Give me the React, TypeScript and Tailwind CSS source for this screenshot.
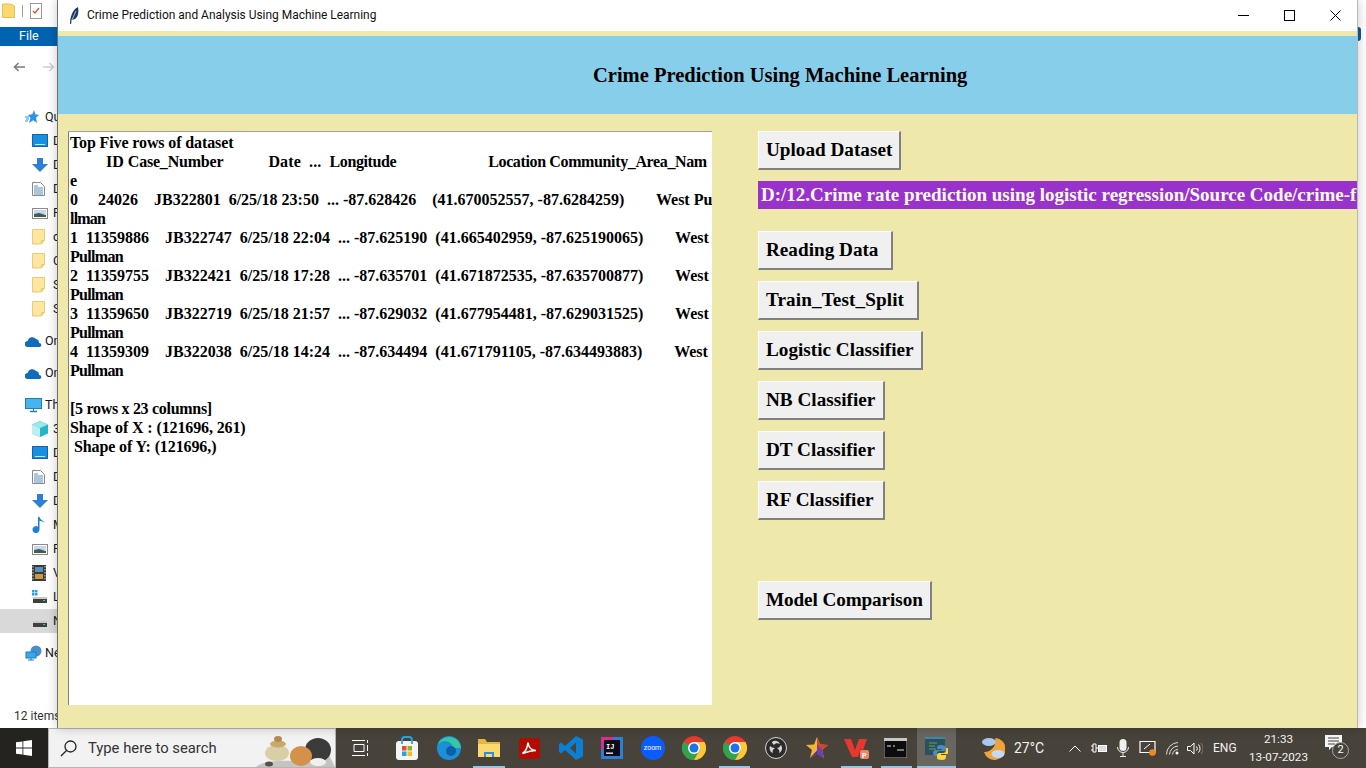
import React from "react";

function FolderIcon() {
  return (
    <svg width="13" height="16" viewBox="0 0 13 16">
      <path d="M.5.5h12v11l-3 3.500H.5z" fill="#fde6a0" stroke="#eccb72" />
      <path d="M12.500 11.500h-3V15" fill="#f3d27c" stroke="#eccb72" />
    </svg>
  );
}

function MonitorIcon() {
  return (
    <svg width="16" height="14" viewBox="0 0 16 14">
      <rect x=".5" y=".5" width="15" height="12" fill="#1a8fe0" stroke="#0a66b8" />
      <rect x="3" y="10" width="10" height="1" fill="#bfe3fa" />
    </svg>
  );
}

function DownIcon() {
  return (
    <svg width="16" height="14" viewBox="0 0 16 14">
      <path d="M5 0h6v6h5l-8 8-8-8h5z" fill="#2f7fd6" />
    </svg>
  );
}

function DocIcon() {
  return (
    <svg width="13" height="14" viewBox="0 0 13 14">
      <path d="M.5.5h8l4 4v9H.5z" fill="#fff" stroke="#8a8a8a" />
      <path d="M2 4h4M2 6h9M2 8h9M2 10h9M2 12h9" stroke="#5a8cc0" />
    </svg>
  );
}

function PictureIcon() {
  return (
    <svg width="16" height="11" viewBox="0 0 16 11">
      <rect x=".5" y=".5" width="15" height="10" fill="#fff" stroke="#8a8a8a" />
      <rect x="2" y="2" width="12" height="4" fill="#c5d9ea" />
      <path d="M2 6l5-1 7 2v2H2z" fill="#3f5f4f" />
    </svg>
  );
}

function CloudIcon() {
  return (
    <svg width="17" height="11" viewBox="0 0 17 11">
      <path d="M3 11a3 3 0 0 1-.4-6A4.800 4.800 0 0 1 11 3a3.800 3.800 0 0 1 3 4 2 2 0 0 1 .5 4z" fill="#0f6cbd" />
    </svg>
  );
}

function StarIcon() {
  return (
    <svg width="14" height="14" viewBox="0 0 14 14">
      <path d="M9 0l1.300 4.200L14 5l-3 2.700 1 5.300-3.600-2.700L4 13l1.500-5L3 5l4.300-.7z" fill="#2a93e6" />
      <path d="M0 7h4M1 9h3M0 11h3" stroke="#2a93e6" />
    </svg>
  );
}

function PcIcon() {
  return (
    <svg width="17" height="15" viewBox="0 0 17 15">
      <rect x=".5" y=".5" width="16" height="10" fill="#46b4f0" stroke="#1c7fc4" />
      <path d="M5 13.500h7" stroke="#1c7fc4" strokeWidth="1.500" />
      <path d="M8.500 11v2" stroke="#1c7fc4" />
    </svg>
  );
}

function CubeIcon() {
  return (
    <svg width="16" height="16" viewBox="0 0 16 16">
      <path d="M8 0l8 3.500v9L8 16l-8-3.500v-9z" fill="#27b7c4" />
      <path d="M8 0l8 3.500L8 7 0 3.500z" fill="#9be7ec" />
      <path d="M0 3.500L8 7v9l-8-3.500z" fill="#bdeff2" />
    </svg>
  );
}

function MusicIcon() {
  return (
    <svg width="14" height="16" viewBox="0 0 14 16">
      <path d="M6 0h1.500c.5 2.500 3.500 3.500 5.500 5.500-2-.8-3.500-1.300-5.500-1.700V12.500a3.500 3.500 0 1 1-1.500-2.800z" fill="#1f7fd8" />
    </svg>
  );
}

function FilmIcon() {
  return (
    <svg width="14" height="16" viewBox="0 0 14 16">
      <rect width="14" height="16" fill="#3a3a3a" />
      <rect x="3" y="2" width="8" height="5" fill="#5b8fc0" />
      <rect x="3" y="9" width="8" height="5" fill="#c9993a" />
      <path d="M1 1v14M13 1v14" stroke="#ddd" strokeDasharray="1.500 1.500" />
    </svg>
  );
}

function DriveIcon({ win }: { win?: boolean }) {
  return (
    <svg width="16" height="14" viewBox="0 0 16 14">
      {win && <path d="M0 0h2.500v2.500H0zM3 0h2.500v2.500H3zM0 3h2.500v2.500H0zM3 3h2.500v2.500H3z" fill="#22a0e8" />}
      <rect x="1" y="7" width="14" height="2" fill="#c9c9c9" />
      <rect x="1" y="9" width="14" height="4" fill="#3f3f3f" />
      <rect x="11" y="10" width="2" height="1" fill="#4fd06a" />
    </svg>
  );
}

function NetworkIcon() {
  return (
    <svg width="17" height="16" viewBox="0 0 17 16">
      <circle cx="11" cy="6" r="5.500" fill="#4a8fc9" />
      <rect x="1" y="7" width="10" height="6" fill="#3aa7ea" stroke="#1c7fc4" />
      <path d="M3 15h6M6 13v2" stroke="#1c7fc4" />
    </svg>
  );
}

function SideRow({ icon, label, indent, selected, className = "" }: { icon: React.ReactNode; label: string; indent?: boolean; selected?: boolean; className?: string }) {
  return (
    <div className={`${className} h-6 flex items-center whitespace-nowrap text-[12.500px] text-[#1a1a1a] ${selected ? "bg-[#d9d9d9]" : ""} ${indent ? "pl-[32px]" : "pl-[25px]"}`}>
      <span className={`${indent ? "w-[21px]" : "w-[20px]"} shrink-0 flex items-center`}>{icon}</span>
      <span>{label}</span>
    </div>
  );
}

function ExplorerBehind() {
  return (
    <div className="w-[57px] shrink-0 overflow-hidden bg-white flex flex-col [font-family:'Roboto',sans-serif]">
      <div className="h-[27px] shrink-0 flex items-start gap-[7px] pl-[2px] pt-[3px]">
        <svg width="13" height="15" viewBox="0 0 13 15"><path d="M.5 1h8l4 2v11.500H.5z" fill="#fbd96f" stroke="#e6bf55" /></svg>
        <span className="w-px h-3 mt-[2px] bg-[#a0a0a0]" />
        <svg width="12" height="16" viewBox="0 0 12 16"><rect x=".5" y=".5" width="11" height="15" fill="#fff" stroke="#999" /><path d="M3 8l2 2 4-5" stroke="#d9542b" strokeWidth="1.300" fill="none" /></svg>
      </div>
      <div className="h-[19px] shrink-0 w-[57px] bg-[#0063b1] flex items-center pl-[19px] text-[12.500px] text-white">File</div>
      <div className="h-[42px] shrink-0 flex items-center gap-[18px] pl-[13px]">
        <svg width="12" height="10" viewBox="0 0 12 10" fill="none" stroke="#7a7a7a" strokeWidth="1.500"><path d="M12 5H1.500M5.500 1L1.500 5l4 4" /></svg>
        <svg width="12" height="10" viewBox="0 0 12 10" fill="none" stroke="#cfcfcf" strokeWidth="1.500"><path d="M0 5h10.500M6.500 1l4 4-4 4" /></svg>
      </div>
      <div className="flex-1 pt-[17px]">
        <SideRow icon={<StarIcon />} label="Quick access" />
        <SideRow indent icon={<MonitorIcon />} label="Desktop" />
        <SideRow indent icon={<DownIcon />} label="Downloads" />
        <SideRow indent icon={<DocIcon />} label="Documents" />
        <SideRow indent icon={<PictureIcon />} label="Pictures" />
        <SideRow indent icon={<FolderIcon />} label="code" />
        <SideRow indent icon={<FolderIcon />} label="Crime" />
        <SideRow indent icon={<FolderIcon />} label="Source" />
        <SideRow indent icon={<FolderIcon />} label="Screens" />
        <SideRow icon={<CloudIcon />} label="OneDrive" className="mt-2" />
        <SideRow icon={<CloudIcon />} label="OneDrive" className="mt-2" />
        <SideRow icon={<PcIcon />} label="This PC" className="mt-2" />
        <SideRow indent icon={<CubeIcon />} label="3D Objects" />
        <SideRow indent icon={<MonitorIcon />} label="Desktop" />
        <SideRow indent icon={<DocIcon />} label="Documents" />
        <SideRow indent icon={<DownIcon />} label="Downloads" />
        <SideRow indent icon={<MusicIcon />} label="Music" />
        <SideRow indent icon={<PictureIcon />} label="Pictures" />
        <SideRow indent icon={<FilmIcon />} label="Videos" />
        <SideRow indent icon={<DriveIcon win />} label="Local Disk" />
        <SideRow indent selected icon={<DriveIcon />} label="New Volume" />
        <SideRow icon={<NetworkIcon />} label="Network" className="mt-2" />
      </div>
      <div className="h-[22px] shrink-0 pl-[14px] text-[12px] leading-[20px] whitespace-nowrap text-[#333]">12 items</div>
    </div>
  );
}

function TkButton({ label, width, className = "" }: { label: string; width: string; className?: string }) {
  return (
    <button
      className={`${width} ${className} h-[39px] shrink-0 bg-[#f0f0f0] border-t border-l border-t-white border-l-white border-b-2 border-r-2 border-b-[#808080] border-r-[#808080] pl-[7px] text-left text-[19.200px] font-bold text-black [font-family:'Liberation_Serif',serif]`}
    >
      {label}
    </button>
  );
}

function OutputText() {
  return (
    <div className="w-[644px] h-[574px] shrink-0 bg-white border-t border-l border-t-[#a0a0a0] border-l-[#808080] px-[1px] py-[1px] overflow-hidden text-[16px] leading-[19px] font-bold text-black whitespace-pre [font-family:'Liberation_Serif',serif]">
      <div className="h-[19px] tracking-[-0.12px]">Top Five rows of dataset</div>
      <div className="h-[19px]">
        {"         ID "}
        <span className="tracking-[-0.2px]">Case_Number</span>
        <span className="tracking-[0.1px]">{"           Date  ...  "}</span>
        <span className="tracking-[-0.4px]">Longitude</span>
        {"                       "}
        <span className="tracking-[-0.37px]">Location Community_Area_Nam</span>
      </div>
      <div className="h-[19px]">e</div>
      <div className="h-[19px]">0     24026    JB322801  6/25/18 23:50  ... -87.628426    (41.670052557, -87.6284259)        West Pu</div>
      <div className="h-[19px] tracking-[-0.8px]">llman</div>
      <div className="h-[19px]">1  11359886    JB322747  6/25/18 22:04  ... -87.625190  (41.665402959, -87.625190065)        West</div>
      <div className="h-[19px] tracking-[-0.7px]">Pullman</div>
      <div className="h-[19px]">2  11359755    JB322421  6/25/18 17:28  ... -87.635701  (41.671872535, -87.635700877)        West</div>
      <div className="h-[19px] tracking-[-0.7px]">Pullman</div>
      <div className="h-[19px]">3  11359650    JB322719  6/25/18 21:57  ... -87.629032  (41.677954481, -87.629031525)        West</div>
      <div className="h-[19px] tracking-[-0.7px]">Pullman</div>
      <div className="h-[19px]">4  11359309    JB322038  6/25/18 14:24  ... -87.634494  (41.671791105, -87.634493883)        West</div>
      <div className="h-[19px] tracking-[-0.7px]">Pullman</div>
      <div className="h-[19px]" />
      <div className="h-[19px] tracking-[-0.3px]">[5 rows x 23 columns]</div>
      <div className="h-[19px] tracking-[-0.12px]">Shape of X : (121696, 261)</div>
      <div className="h-[19px] tracking-[-0.1px]"> Shape of Y: (121696,)</div>
    </div>
  );
}

function AppWindow() {
  return (
    <div className="flex-1 min-w-0 flex flex-col border-l border-l-[#707070] border-r border-r-[#b8b8b8] bg-[#eee8aa] shadow-[0_0_10px_rgba(0,0,0,0.22)] z-10">
      <div className="h-[31px] shrink-0 bg-white flex items-center">
        <svg className="ml-[11px]" width="10" height="17" viewBox="0 0 10 17">
          <path d="M1 17C1 11 3 3 9 0c1 5 0 10-3 12l-3 1-1 4z" fill="#1f3a66" />
          <path d="M2 15L7 4" stroke="#c9d8ea" strokeWidth=".8" />
        </svg>
        <span className="ml-[8px] pt-[1px] text-[11.950px] text-[#111] [font-family:'Roboto',sans-serif]">Crime Prediction and Analysis Using Machine Learning</span>
        <div className="ml-auto flex items-center h-full">
          <div className="w-[45px] flex justify-center"><span className="block w-[11px] h-px bg-black" /></div>
          <div className="w-[47px] flex justify-center"><span className="block w-[11px] h-[11px] border border-black" /></div>
          <div className="w-[44px] flex justify-center">
            <svg width="11" height="11" viewBox="0 0 11 11" stroke="#000" strokeWidth="1"><path d="M.5.5l10 10M10.500.5l-10 10" /></svg>
          </div>
        </div>
      </div>
      <div className="mt-[5px] h-[78px] shrink-0 bg-[#87ceeb] flex items-center pl-[535px] text-[20.500px] font-bold text-black [font-family:'Liberation_Serif',serif]">
        Crime Prediction Using Machine Learning
      </div>
      <div className="flex-1 min-h-0 flex pl-[10px] pt-[17px]">
        <OutputText />
        <div className="ml-[46px] flex-1 min-w-0 flex flex-col items-start">
          <TkButton label="Upload Dataset" width="w-[143px]" />
          <div className="mt-[11px] h-[28px] w-full overflow-hidden whitespace-nowrap bg-[#9932cc] pl-[3px] text-[19px] leading-[28px] font-bold text-[#fffafa] [font-family:'Liberation_Serif',serif]">
            D:/12.Crime rate prediction using logistic regression/Source Code/crime-f
          </div>
          <TkButton label="Reading Data" width="w-[135px]" className="mt-[22px]" />
          <TkButton label="Train_Test_Split" width="w-[161px]" className="mt-[11px] tracking-[0.1px]" />
          <TkButton label="Logistic Classifier" width="w-[165px]" className="mt-[11px]" />
          <TkButton label="NB Classifier" width="w-[127px]" className="mt-[11px]" />
          <TkButton label="DT Classifier" width="w-[127px]" className="mt-[11px]" />
          <TkButton label="RF Classifier" width="w-[127px]" className="mt-[11px]" />
          <TkButton label="Model Comparison" width="w-[174px]" className="mt-[61px] tracking-[-0.1px]" />
        </div>
      </div>
    </div>
  );
}

function ChromeIcon() {
  return (
    <svg width="24" height="24" viewBox="0 0 24 24">
      <circle cx="12" cy="12" r="12" fill="#e33b2e" />
      <path d="M12 12L1.600 6A12 12 0 0 0 12 24l6-10z" fill="#2fa44f" />
      <path d="M12 6h10.400A12 12 0 0 1 12 24l6-10.400z" fill="#fcc934" />
      <circle cx="12" cy="12" r="6" fill="#fff" />
      <circle cx="12" cy="12" r="4.500" fill="#1a73e8" />
    </svg>
  );
}

function TaskIcon({ children, className = "w-[41px]" }: { children: React.ReactNode; className?: string }) {
  return <div className={`${className} relative h-full shrink-0 flex items-center justify-center`}>{children}</div>;
}

function RunningMark({ className }: { className: string }) {
  return <span className={`${className} absolute bottom-0 h-[2px] bg-[#8fc7ec]`} />;
}

function Taskbar() {
  return (
    <div className="h-[40px] shrink-0 bg-[#47433a] flex items-center text-white [font-family:'Roboto',sans-serif]">
      <div className="w-[48px] h-full bg-[#25231f] flex items-center justify-center">
        <svg width="16" height="16" viewBox="0 0 16 16" fill="#fff"><path d="M0 2.300l6.500-.9v6.200H0zM7.300 1.300L16 0v7.600H7.300zM0 8.400h6.500v6.200L0 13.700zM7.300 8.400H16V16l-8.700-1.200z" /></svg>
      </div>
      <div className="w-[288px] h-full bg-[#f2f2f2] border border-[#b5b5b5] flex items-center overflow-hidden">
        <svg className="ml-[11px] shrink-0" width="17" height="17" viewBox="0 0 17 17" fill="none" stroke="#222" strokeWidth="1.300"><circle cx="10.500" cy="6.500" r="5.500" /><path d="M6.500 10.500L1 16" /></svg>
        <span className="ml-[11px] text-[14.800px] text-[#333] whitespace-nowrap">Type here to search</span>
        <svg className="ml-auto shrink-0" width="82" height="38" viewBox="0 0 82 38">
          <path d="M3 38c6-6 24-7 36-6 16 1 28 0 36-8l7 14z" fill="#c4c4c0" />
          <ellipse cx="24" cy="24" rx="12" ry="8" fill="#d9cfa6" />
          <ellipse cx="25" cy="15" rx="8" ry="3.500" fill="#c9a96a" />
          <ellipse cx="25" cy="10" rx="4" ry="3" fill="#b58a4c" />
          <ellipse cx="65" cy="21" rx="13" ry="12" fill="#3b3b3b" />
          <ellipse cx="48" cy="27" rx="11" ry="10" fill="#d4914a" />
          <ellipse cx="65" cy="33" rx="8" ry="4" fill="#f0f0ee" />
          <ellipse cx="16" cy="35" rx="4" ry="2.500" fill="#55524c" />
        </svg>
      </div>
      <TaskIcon className="w-[48px]">
        <svg width="17" height="16" viewBox="0 0 17 16" fill="none" stroke="#fff"><path d="M0 .5h13M0 15.500h13M2 4.500h10v7H2zM15.500 0v3M15.500 5v6M15.500 13v3" /></svg>
      </TaskIcon>
      <TaskIcon className="w-[46px]">
        <svg width="24" height="24" viewBox="0 0 24 24">
          <rect x="1" y="5" width="22" height="19" rx="3" fill="#f4f4f4" />
          <path d="M7 8V4a3 3 0 0 1 3-3h4a3 3 0 0 1 3 3v4" fill="none" stroke="#27a6e0" strokeWidth="1.800" />
          <rect x="7" y="10" width="4.500" height="4.500" fill="#e8492f" />
          <rect x="12.500" y="10" width="4.500" height="4.500" fill="#7fba2a" />
          <rect x="7" y="15.500" width="4.500" height="4.500" fill="#1ea5e8" />
          <rect x="12.500" y="15.500" width="4.500" height="4.500" fill="#fcb813" />
        </svg>
      </TaskIcon>
      <TaskIcon className="w-[38px]">
        <svg width="24" height="24" viewBox="0 0 24 24">
          <circle cx="12" cy="12" r="12" fill="#1b8fd8" />
          <path d="M24 13c0-7-5-12-12-12C6 1 2 5 .6 9 3 5 8 4 12 6c3 1.500 4 4 3 6h9z" fill="#35c9a3" />
          <circle cx="14" cy="15" r="5" fill="#0b5fa8" />
        </svg>
      </TaskIcon>
      <TaskIcon>
        <svg width="22" height="18" viewBox="0 0 22 18">
          <path d="M0 0h7l2 3h13v15H0z" fill="#e8b445" />
          <path d="M0 5h22v13H0z" fill="#fbd96f" />
          <path d="M6 18v-5h10v5h-2v-3H8v3z" fill="#2f8fd6" />
        </svg>
        <RunningMark className="left-[5px] right-[4px]" />
      </TaskIcon>
      <TaskIcon>
        <svg width="21" height="21" viewBox="0 0 21 21">
          <rect width="21" height="21" rx="3" fill="#b30b00" />
          <path d="M3.500 15.500c3-2 5-6 5.500-11 .5 4 3 8 8 8-4 0-8 1-13.500 3z" fill="none" stroke="#fff" strokeWidth="1.600" />
        </svg>
      </TaskIcon>
      <TaskIcon>
        <svg width="24" height="24" viewBox="0 0 24 24">
          <path d="M17 0l7 3.500v17L17 24 6 14l-4 3.500L0 16v-8l2-1.500L6 10z" fill="#0b7fd1" />
          <path d="M17 6.500L11 12l6 5.500z" fill="#47433a" />
        </svg>
      </TaskIcon>
      <TaskIcon>
        <svg width="22" height="22" viewBox="0 0 22 22">
          <rect width="22" height="22" fill="#2a7fd6" />
          <path d="M0 0h14L0 14z" fill="#d62f8e" />
          <rect x="3" y="3" width="16" height="16" fill="#0d0d1a" />
          <rect x="5" y="15.500" width="7" height="1.300" fill="#fff" />
          <text x="5" y="12" fontSize="7" fontWeight="700" fill="#fff" fontFamily="Liberation Mono, monospace">IJ</text>
        </svg>
      </TaskIcon>
      <TaskIcon>
        <div className="w-[24px] h-[24px] rounded-full bg-[#0b5cff] flex items-center justify-center text-[7px] text-white">zoom</div>
      </TaskIcon>
      <TaskIcon><ChromeIcon /></TaskIcon>
      <TaskIcon>
        <ChromeIcon />
        <RunningMark className="left-[5px] right-[5px]" />
      </TaskIcon>
      <TaskIcon>
        <svg width="22" height="22" viewBox="0 0 22 22">
          <circle cx="11" cy="11" r="10.500" fill="#2d2a2b" stroke="#d5d5d5" />
          <path d="M7 5a5 5 0 0 1 8 2c-2-1-5-1-6 1-1-1-2-2-2-3zM16 8c2 3 1 7-2 8 1-2 0-4-2-5 2 0 3-2 4-3zM5 9c-1 3 0 6 3 7-1-2 0-4 2-5-2 0-4-1-5-2z" fill="#d5d5d5" />
        </svg>
      </TaskIcon>
      <TaskIcon>
        <svg width="22" height="22" viewBox="0 0 22 22">
          <path d="M11 0l3 7.500 8 .5-6 5 2 8-7-4.500L4 21l2-8-6-5 8-.5z" fill="#f2b632" />
          <path d="M11 0l3 7.500 8 .5-6 5-5 .5z" fill="#d6402f" />
          <path d="M11 13.500l7 7.500-7-4.500L4 21z" fill="#4b2a8c" />
          <path d="M11 8v9l7 4-2-8z" fill="#6a3fb5" />
        </svg>
      </TaskIcon>
      <TaskIcon className="w-[38px]">
        <svg width="25" height="22" viewBox="0 0 25 22">
          <path d="M0 2h7l4 11 4-11h5l-6 18H8z" fill="#e8372c" />
          <path d="M15 2h8l-5 14z" fill="#e8372c" />
          <rect x="16" y="13" width="9" height="9" rx="2" fill="#f0846a" />
          <text x="18" y="20.500" fontSize="7" fontWeight="700" fill="#fff">P</text>
        </svg>
        <RunningMark className="left-[4px] right-[3px]" />
      </TaskIcon>
      <TaskIcon className="w-[40px]">
        <svg width="23" height="20" viewBox="0 0 23 20">
          <rect width="23" height="20" fill="#0c0c0c" stroke="#aaa" />
          <rect width="23" height="3" fill="#c8c8c8" />
          <path d="M3 8h4M9 8h2M13 12h7" stroke="#e5e5e5" />
        </svg>
        <RunningMark className="left-[6px] right-[3px]" />
      </TaskIcon>
      <TaskIcon className="w-[39px] ml-[2px] bg-[#68665e]">
        <svg width="23" height="24" viewBox="0 0 23 24">
          <rect y="1" width="20" height="18" fill="#2b5060" />
          <rect y="1" width="20" height="2" fill="#3f88a8" />
          <path d="M4 7h8M4 10h6M4 13h7" stroke="#6aa05a" />
          <path d="M16 9c-3 0-4 1-4 3v1h5v1h-6c-2 0-3 1-3 3s1 3 3 3h1v-2c0-2 1-3 3-3h4c1 0 2-1 2-2v-2c0-1-2-2-5-2z" fill="#4b8bbe" />
          <path d="M17 24c3 0 4-1 4-3v-2h-5v-1h6c1.500 0 2-1 2-3s-1-3-2-3h-1v2c0 2-1 3-3 3h-4c-1 0-2 1-2 2v3c0 1 2 2 5 2z" fill="#ffd43b" />
        </svg>
        <RunningMark className="left-0 right-0" />
      </TaskIcon>
      <svg className="ml-[25px] shrink-0" width="24" height="24" viewBox="0 0 24 24">
        <path d="M14 2a11 11 0 1 1-11 14A11 11 0 0 0 14 2z" fill="#f2a23a" />
        <ellipse cx="8" cy="6" rx="7" ry="4" fill="#a9c8ec" />
        <ellipse cx="17" cy="18" rx="6.500" ry="4" fill="#c5d9f2" />
      </svg>
      <span className="ml-[9px] w-[30px] shrink-0 text-[14px] text-[#f2f2f2]">27°C</span>
      <svg className="ml-[25px] shrink-0" width="12" height="7" viewBox="0 0 12 7" fill="none" stroke="#fff"><path d="M.5 6.500L6 1l5.500 5.500" /></svg>
      <svg className="ml-[10px] shrink-0" width="16" height="11" viewBox="0 0 16 11">
        <path d="M0 3h2M0 7h2M2 1h3v8H2zM5 5h2" stroke="#fff" fill="none" />
        <rect x="7.500" y="2.500" width="8" height="6" stroke="#fff" fill="#ddd" />
      </svg>
      <svg className="ml-[10px] shrink-0" width="12" height="18" viewBox="0 0 12 18">
        <rect x="2.500" y="0" width="7" height="12" rx="3.500" fill="#f0f0f0" />
        <path d="M.5 8a5.500 5.500 0 0 0 11 0M6 13.500V17M3 17.500h6" stroke="#f0f0f0" fill="none" />
      </svg>
      <svg className="ml-[10px] shrink-0" width="17" height="16" viewBox="0 0 17 16" fill="none">
        <path d="M1 1.500h15v11H1z" stroke="#fff" strokeWidth="1.200" />
        <path d="M5 9l6-5" stroke="#fff" />
        <circle cx="13.500" cy="12.500" r="3.300" fill="#f08a1c" />
      </svg>
      <svg className="ml-[10px] shrink-0" width="14" height="13" viewBox="0 0 14 13" fill="none" stroke="#dcdcdc">
        <path d="M.5 12.500A12 12 0 0 1 12 .5M3.500 12.500A9 9 0 0 1 12 4M6.500 12.500A6 6 0 0 1 12 7.500" />
        <circle cx="11" cy="11" r="1.500" fill="#fff" stroke="none" />
      </svg>
      <svg className="ml-[7px] shrink-0" width="16" height="13" viewBox="0 0 16 13" fill="none" stroke="#fff">
        <path d="M.5 4.500h3l3.500-3.500v11L3.500 8.500h-3zM9.500 4.500a3 3 0 0 1 0 4M11.500 2.500a6 6 0 0 1 0 8" />
        <path d="M14 1a9 9 0 0 1 0 11" stroke="#777" />
      </svg>
      <span className="ml-[10px] w-[23px] shrink-0 text-[12px] text-[#f2f2f2]">ENG</span>
      <div className="ml-[14px] w-[57px] shrink-0 flex flex-col items-center text-[11.700px] leading-[18px] text-[#f2f2f2] whitespace-nowrap">
        <span>21:33</span>
        <span>13-07-2023</span>
      </div>
      <div className="relative ml-[18px] w-[24px] h-[26px] shrink-0">
        <svg width="17" height="15" viewBox="0 0 17 15"><path d="M0 0h17v12H7l-3 3v-3H0z" fill="#f5f5f5" /><path d="M3 3h11M3 6h11M3 9h7" stroke="#47433a" /></svg>
        <span className="absolute left-[7px] top-[7px] w-[17px] h-[17px] rounded-full bg-[#47433a] border border-[#aaa] flex items-center justify-center text-[11px] text-white">2</span>
      </div>
    </div>
  );
}

export default function App() {
  return (
    <div className="w-screen h-screen overflow-hidden flex flex-col bg-white">
      <div className="flex-1 min-h-0 flex">
        <ExplorerBehind />
        <AppWindow />
        <div className="w-[8px] shrink-0 bg-white relative">
          <span className="absolute left-0 top-[27px] w-[3px] h-[14px] rounded-r-full bg-[#0f5a9c]" />
        </div>
      </div>
      <Taskbar />
    </div>
  );
}
